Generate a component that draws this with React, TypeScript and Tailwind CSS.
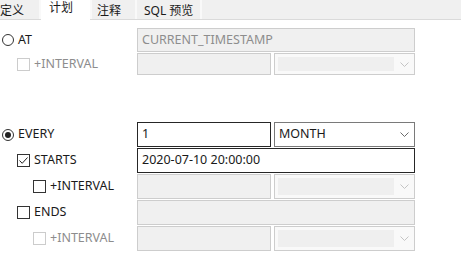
import React from "react";

const font = { fontFamily: '"Noto Sans", "Noto Sans CJK SC", sans-serif' };

function Chevron({ disabled }: { disabled?: boolean }) {
  return (
    <svg viewBox="0 0 9 5" className="h-[5px] w-[9px]" fill="none" stroke={disabled ? "#c4c4c4" : "#6b6b6b"} strokeWidth={1}>
      <path d="M0.5 0.5 L4.5 4.5 L8.5 0.5" />
    </svg>
  );
}

function Radio({ checked }: { checked?: boolean }) {
  return (
    <span className="flex h-[12px] w-[12px] items-center justify-center rounded-full border border-[#333]">
      {checked && <span className="h-[6px] w-[6px] rounded-full bg-[#222]" />}
    </span>
  );
}

function Check({ checked, disabled }: { checked?: boolean; disabled?: boolean }) {
  return (
    <span
      className={
        "flex h-[13px] w-[13px] items-center justify-center border bg-white " +
        (disabled ? "border-[#cccccc]" : "border-[#333]")
      }
    >
      {checked && (
        <svg viewBox="0 0 11 11" className="h-[11px] w-[11px]" fill="none" stroke="#222" strokeWidth={1}>
          <path d="M1.5 5.5 L4.2 8.3 L9.5 2.5" />
        </svg>
      )}
    </span>
  );
}

function DisabledInput({ w, text }: { w: string; text?: string }) {
  return (
    <div className={`${w} flex h-full items-center border border-[#cdcdcd] bg-[#f0f0f0] pl-[4px] text-[#8d8d8d]`}>
      {text}
    </div>
  );
}

function DisabledSelect() {
  return (
    <div className="flex h-full w-[141px] items-center border border-[#cdcdcd] bg-[#f9f9f9] py-[3px] pl-[3px]">
      <div className="h-full flex-1 bg-[#efefef]" />
      <div className="flex w-[20px] justify-center">
        <Chevron disabled />
      </div>
    </div>
  );
}

function Label({ indent, children }: { indent: string; children: React.ReactNode }) {
  return <div className={`flex w-[137px] shrink-0 items-center gap-[4px] ${indent}`}>{children}</div>;
}

export default function App() {
  return (
    <div className="h-[264px] w-[461px] overflow-hidden bg-white text-[12.5px] text-[#1a1a1a]" style={font}>
      <div className="flex h-[20px] border-b border-[#dadada] bg-[#f0f0f0] text-[12px]">
        <div className="flex w-[39px] items-center pt-[2px]">定义</div>
        <div className="w-[2px] bg-[#f9f9f9]" />
        <div className="z-10 -mb-px flex h-[20px] w-[49px] items-start bg-white pl-[8px] leading-[16px]">计划</div>
        <div className="w-[2px] bg-[#f9f9f9]" />
        <div className="flex w-[43px] items-center pl-[5px] pt-[2px]">注释</div>
        <div className="w-[2px] bg-[#f9f9f9]" />
        <div className="flex w-[63px] items-center pl-[7px] pt-[2px]">SQL 预览</div>
        <div className="w-[2px] bg-[#f9f9f9]" />
      </div>

      <div className="flex flex-col pt-[8px]">
        <div className="flex h-[24px]">
          <Label indent="pl-[2px] gap-[3px]">
            <Radio />
            <span>AT</span>
          </Label>
          <DisabledInput w="w-[278px]" text="CURRENT_TIMESTAMP" />
        </div>
        <div className="flex h-[24px]">
          <Label indent="pl-[17px]">
            <Check disabled />
            <span className="text-[#8d8d8d]">+INTERVAL</span>
          </Label>
          <div className="flex gap-[3px] py-px">
            <DisabledInput w="w-[134px]" />
            <DisabledSelect />
          </div>
        </div>

        <div className="mt-[46px] flex h-[26px] pb-px">
          <Label indent="pl-[2px] gap-[3px]">
            <Radio checked />
            <span>EVERY</span>
          </Label>
          <div className="flex gap-[3px]">
            <div className="flex h-full w-[134px] items-center border border-[#262626] bg-white pl-[4px]">1</div>
            <div className="flex h-full w-[141px] items-center border border-[#7a7a7a] bg-white pl-[4px]">
              <span className="flex-1">MONTH</span>
              <span className="flex w-[20px] justify-center">
                <Chevron />
              </span>
            </div>
          </div>
        </div>
        <div className="flex h-[26px] pb-px">
          <Label indent="pl-[17px]">
            <Check checked />
            <span>STARTS</span>
          </Label>
          <div className="flex h-full w-[278px] items-center border border-[#262626] bg-white pl-[4px]">
            2020-07-10 20:00:00
          </div>
        </div>
        <div className="flex h-[26px] pb-px">
          <Label indent="pl-[33px]">
            <Check />
            <span>+INTERVAL</span>
          </Label>
          <div className="flex gap-[3px]">
            <DisabledInput w="w-[134px]" />
            <DisabledSelect />
          </div>
        </div>
        <div className="flex h-[26px] pb-px">
          <Label indent="pl-[17px]">
            <Check />
            <span>ENDS</span>
          </Label>
          <DisabledInput w="w-[278px]" />
        </div>
        <div className="flex h-[26px] pb-px">
          <Label indent="pl-[33px]">
            <Check disabled />
            <span className="text-[#8d8d8d]">+INTERVAL</span>
          </Label>
          <div className="flex gap-[3px]">
            <DisabledInput w="w-[134px]" />
            <DisabledSelect />
          </div>
        </div>
      </div>
    </div>
  );
}
